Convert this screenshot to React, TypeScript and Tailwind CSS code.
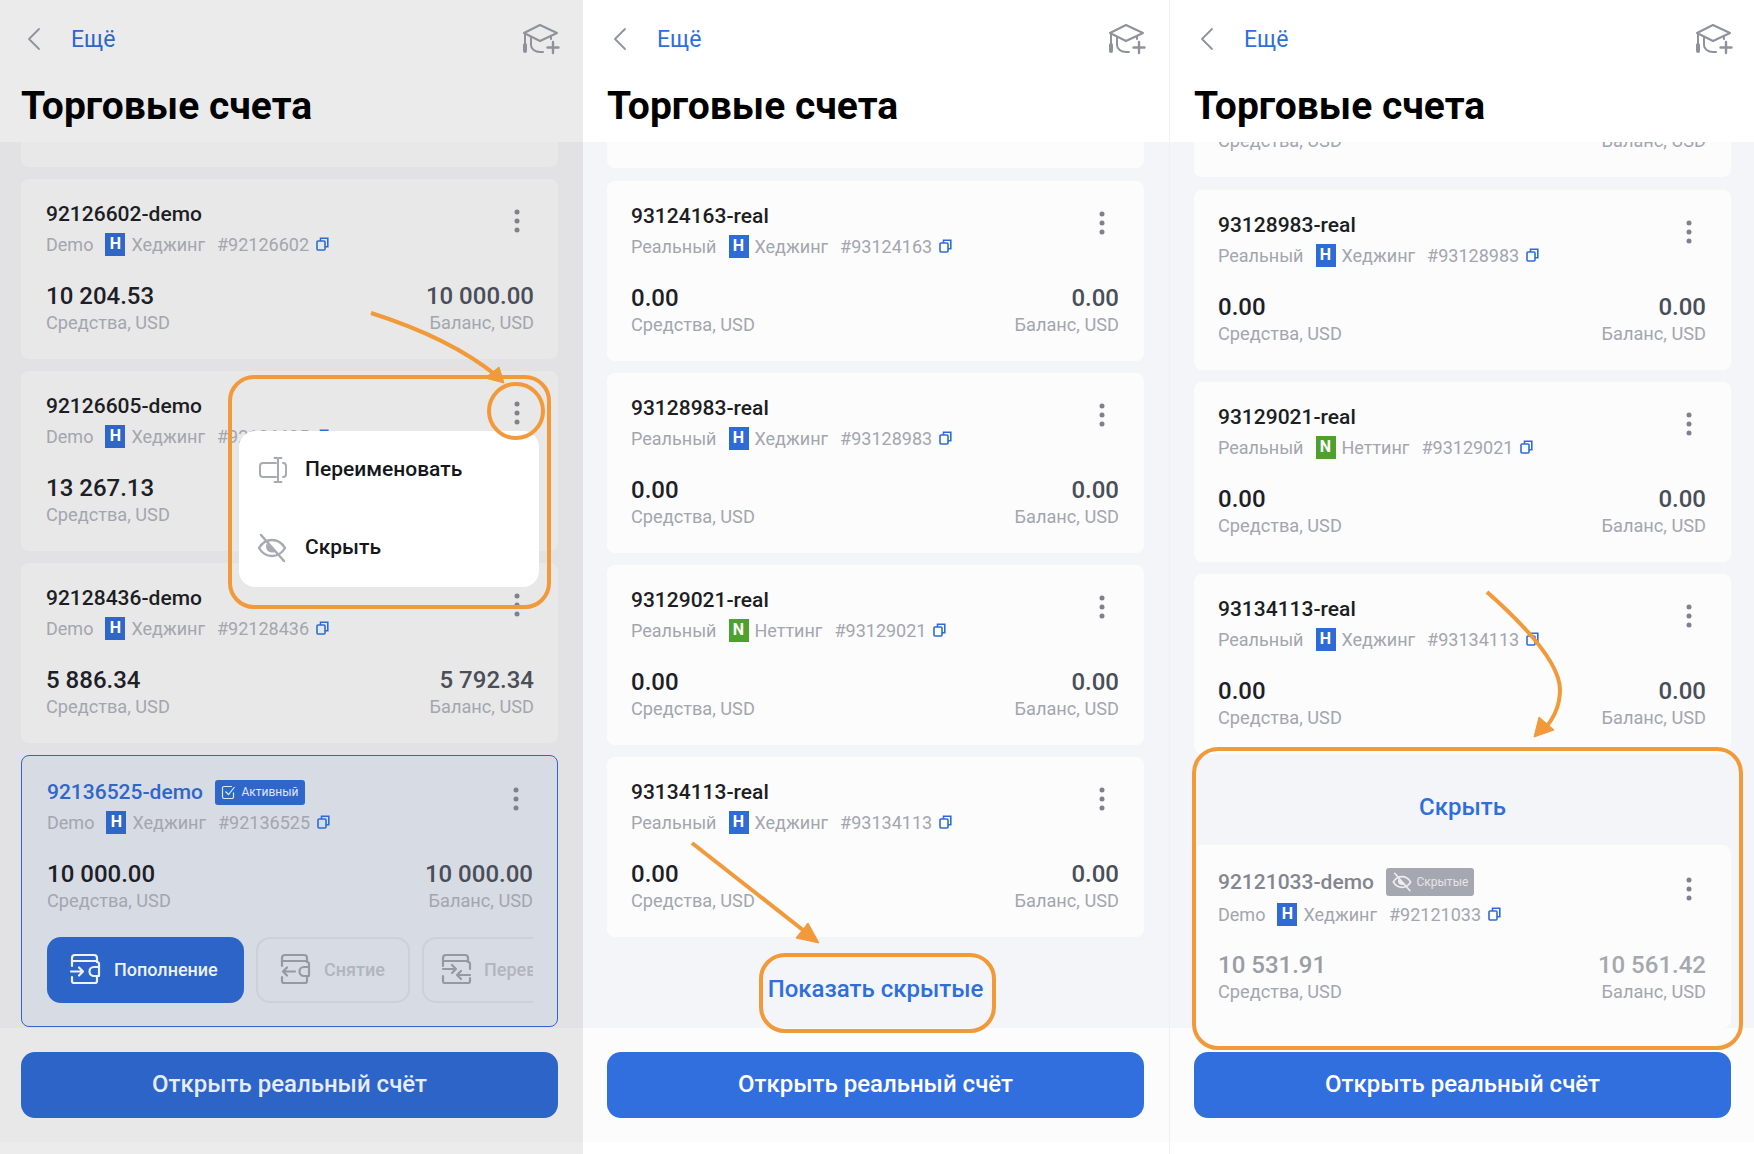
import React from "react";

type Theme = "dim" | "light";

type Account = {
  name: string;
  kind: string;
  net: "H" | "N";
  num: string;
  equity: string;
  balance: string;
};

function Chevron() {
  return (
    <svg width="16" height="24" viewBox="0 0 16 24" fill="none" stroke="#8f939c" strokeWidth="1.8" strokeLinecap="round" strokeLinejoin="round">
      <path d="M13 2 3 12l10 10" />
    </svg>
  );
}

function CapIcon() {
  return (
    <svg width="38" height="34" viewBox="0 0 38 34" fill="none" stroke="#8f929a" strokeWidth="2" strokeLinecap="round" strokeLinejoin="round">
      <path d="M18 3 2 11l16 8 17-8z" />
      <path d="M9 15v8c0 4 4 7 9 7h3" />
      <path d="M29 14v3" />
      <path d="M3 12v12" />
      <path d="M3 23v6" strokeWidth="4" />
      <path d="M31 20v11M25.5 25.5h11" strokeWidth="2.4" />
    </svg>
  );
}

function Kebab({ color = "#7f828b" }: { color?: string }) {
  return (
    <svg width="20" height="24" viewBox="0 0 20 24" fill={color}>
      <circle cx="10" cy="3" r="2.5" />
      <circle cx="10" cy="12" r="2.5" />
      <circle cx="10" cy="21" r="2.5" />
    </svg>
  );
}

function CopyIcon() {
  return (
    <svg width="13" height="14" viewBox="0 0 13 14" fill="none" stroke="#2f6bd6" strokeWidth="1.6">
      <rect x="1" y="4" width="8" height="9" rx="1" />
      <path d="M4.5 4V1.2h7.3v8.6H9" />
    </svg>
  );
}

function EyeOff({ size = 30, color = "#a7aab2" }: { size?: number; color?: string }) {
  return (
    <svg width={size} height={size} viewBox="0 0 30 30" fill="none" stroke={color} strokeWidth="2.4" strokeLinecap="round">
      <path d="M2 15c3-5 8-8 13-8s10 3 13 8c-3 5-8 8-13 8S5 20 2 15z" />
      <path d="M9.500 10.500c-1.500 4.500.5 9 5.500 9 2 0 3.500-.5 4.500-1.500z" fill={color} stroke="none" />
      <path d="M4 2l23 26" />
    </svg>
  );
}

function RenameIcon() {
  return (
    <svg width="30" height="28" viewBox="0 0 30 28" fill="none" stroke="#a7aab2" strokeWidth="2" strokeLinecap="round">
      <path d="M18 7H5a3 3 0 0 0-3 3v8a3 3 0 0 0 3 3h13" />
      <path d="M20 2v24M16.500 2h7M16.500 26h7" />
      <path d="M25 7c2 0 3 1.500 3 3v8c0 1.500-1 3-3 3" />
    </svg>
  );
}

function WalletIcon({ mode, color }: { mode: "in" | "out" | "move"; color: string }) {
  return (
    <svg width="32" height="34" viewBox="0 0 32 34" fill="none" stroke={color} strokeWidth="2.2" strokeLinecap="round" strokeLinejoin="round" className="shrink-0">
      <path d="M3 14V6a3 3 0 0 1 3-3h19a3 3 0 0 1 3 3v4" />
      <path d="M3 9h25" />
      {mode === "move" ? (
        <>
          <path d="M28 10a2 2 0 0 1 2 2v5" />
          <path d="M3 17h13M12 13l4 4-4 4" />
          <path d="M3 24v5a2 2 0 0 0 2 2h23a2 2 0 0 0 2-2v-3" />
          <path d="M30 23H17M21 19l-4 4 4 4" />
        </>
      ) : (
        <>
          <path d="M3 25v4a2 2 0 0 0 2 2h21a2 2 0 0 0 2-2v-4" />
          <path d="M28 10a2 2 0 0 1 2 2v3" />
          <path d="M30 15h-5a4.500 4.500 0 0 0 0 9h5z" />
          {mode === "in" ? <path d="M2 19.500h12M10 15.500l4 4-4 4" /> : <path d="M16 19.500H4M8 15.500l-4 4 4 4" />}
        </>
      )}
    </svg>
  );
}

function Card({
  a,
  theme,
  state = "normal",
  className = "",
}: {
  a: Account;
  theme: Theme;
  state?: "normal" | "active" | "hidden";
  className?: string;
}) {
  const active = state === "active";
  const hidden = state === "hidden";
  const dim = theme === "dim";
  const box = active
    ? "h-[272px] border-[1.5px] border-[#2f66c8] bg-[#d7dbe4] pl-[25px] pr-[24px] pt-[23px] "
    : hidden
      ? "h-[183px] bg-[#fcfcfd] pl-[24px] pr-[25px] pt-[24px] "
      : dim
        ? "h-[180px] bg-[#e8e8e9] pl-[25px] pr-[24px] pt-[22px] "
        : "h-[180px] bg-[#fcfcfd] pl-[24px] pr-[25px] pt-[22px] ";
  return (
    <div className={"shrink-0 rounded-[8px] " + box + className}>
      <div className="flex justify-between">
        <div>
          <div className="flex h-[26px] items-center gap-[12px]">
            <span
              className={
                "text-[21px] font-medium leading-[26px] " +
                (active ? "text-[#2f66c8]" : hidden ? "text-[#83868e]" : "text-[#1c1e23]")
              }
            >
              {a.name}
            </span>
            {active && (
              <span className="flex h-[25px] w-[90px] items-center justify-center gap-[5px] rounded-[3px] bg-[#2f66c8] text-[12px] text-[#dfe7f7]">
                <svg width="15" height="15" viewBox="0 0 15 15" fill="none" stroke="#dfe7f7" strokeWidth="1.200">
                  <path d="M12.500 7.500v4.500a1.500 1.500 0 0 1-1.500 1.500H3A1.500 1.500 0 0 1 1.500 12V3A1.500 1.500 0 0 1 3 1.500h8" />
                  <path d="M4.500 6.500l3 3 6-7.500" />
                </svg>
                Активный
              </span>
            )}
            {hidden && (
              <span className="flex h-[28px] w-[88px] items-center justify-center gap-[5px] rounded-[3px] bg-[#a5a8b0] text-[12px] text-[#e4e5e8]">
                <EyeOff size={20} color="#eceef0" />
                Скрытые
              </span>
            )}
          </div>
          <div className={"flex h-[24px] items-center text-[18px] text-[#a3a6ae] " + (hidden ? "mt-[7px]" : "mt-[5px]")}>
            <span>{a.kind}</span>
            <span
              className={
                "ml-[12px] flex h-[23px] w-[20px] items-center justify-center text-[16px] font-bold text-white " +
                (a.net === "H" ? (dim ? "bg-[#2f66c8]" : "bg-[#2f6bd6]") : "bg-[#4fa12d]")
              }
            >
              {a.net}
            </span>
            <span className="ml-[6px]">{a.net === "H" ? "Хеджинг" : "Неттинг"}</span>
            <span className="ml-[12px]">#{a.num}</span>
            <span className="ml-[7px]">
              <CopyIcon />
            </span>
          </div>
        </div>
        <div className="mr-[7px] mt-[8px]">
          <Kebab />
        </div>
      </div>
      <div className={"flex justify-between " + (hidden ? "mt-[24px]" : "mt-[25px]")}>
        <div>
          <div className={"text-[24px] font-medium leading-[30px] " + (hidden ? "text-[#9a9da4]" : "text-[#1d2026]")}>
            {a.equity}
          </div>
          <div className="text-[18.2px] leading-[24px] text-[#a3a6ae]">Средства, USD</div>
        </div>
        <div className="text-right">
          <div className={"text-[24px] font-medium leading-[30px] " + (hidden ? "text-[#a5a8af]" : "text-[#4a4e58]")}>
            {a.balance}
          </div>
          <div className="text-[18.2px] leading-[24px] text-[#a3a6ae]">Баланс, USD</div>
        </div>
      </div>
      {active && (
        <div className="mt-[24px] flex gap-[12px] overflow-hidden">
          <button className="flex h-[66px] w-[197px] shrink-0 items-center gap-[13px] rounded-[14px] bg-[#2c64c8] pb-[2px] pl-[22px] text-[18px] font-medium text-[#eef2fb]">
            <WalletIcon mode="in" color="#eef2fb" />
            Пополнение
          </button>
          <button className="flex h-[66px] w-[154px] shrink-0 items-center gap-[13px] rounded-[14px] border-2 border-[#ccd0d9] pb-[2px] pl-[21px] text-[18px] font-medium text-[#b1b5be]">
            <WalletIcon mode="out" color="#9599a3" />
            Снятие
          </button>
          <button className="flex h-[66px] w-[154px] shrink-0 items-center gap-[12px] rounded-[14px] border-2 border-[#ccd0d9] pb-[2px] pl-[16px] text-[18px] font-medium text-[#b1b5be]">
            <WalletIcon mode="move" color="#9599a3" />
            Перевод
          </button>
        </div>
      )}
    </div>
  );
}

function Panel({
  theme,
  className,
  listClass,
  children,
}: {
  theme: Theme;
  className: string;
  listClass: string;
  children: React.ReactNode;
}) {
  const dim = theme === "dim";
  return (
    <div className={"relative flex h-full shrink-0 flex-col " + className}>
      <div className={"h-[142px] shrink-0 pt-[23px] " + listClass + (dim ? " bg-[#ebebec]" : " bg-white")}>
        <div className="flex h-[32px] items-center justify-between">
          <div className="flex items-center">
            <span className="ml-[5px] flex w-[45px]">
              <Chevron />
            </span>
            <span className={"pt-[3px] text-[23px] " + (dim ? "text-[#2f66c8]" : "text-[#2f6fdc]")}>Ещё</span>
          </div>
          <span className="-mr-[2px]">
            <CapIcon />
          </span>
        </div>
        <h1 className="mt-[29px] text-[39px] font-bold leading-[44px] text-black">Торговые счета</h1>
      </div>
      <div className={"flex min-h-0 flex-1 flex-col gap-[12px] overflow-hidden " + listClass + (dim ? " bg-[#e2e2e4]" : " bg-[#f4f5f8]")}>
        {children}
      </div>
      <div className={"h-[114px] shrink-0 pt-[24px] " + listClass + (dim ? " bg-[#e8e8e9]" : " bg-[#fcfcfd]")}>
        <button className={"flex h-[66px] w-full items-center justify-center rounded-[14px] pb-[2px] text-[24px] font-medium " + (dim ? "bg-[#2c64c8] text-[#e6ecf8]" : "bg-[#316fdf] text-white")}>
          Открыть реальный счёт
        </button>
      </div>
      <div className={"h-[12px] shrink-0 " + (dim ? "bg-[#ececed]" : "bg-white")} />
    </div>
  );
}

const r = (name: string, net: "H" | "N" = "H"): Account => ({
  name: name + "-real",
  kind: "Реальный",
  net,
  num: name,
  equity: "0.00",
  balance: "0.00",
});

const d = (name: string, equity: string, balance: string): Account => ({
  name: name + "-demo",
  kind: "Demo",
  net: "H",
  num: name,
  equity,
  balance,
});

export default function App() {
  return (
    <div className="relative flex h-[1154px] w-[1754px] overflow-hidden bg-white font-['Roboto',sans-serif]">
      <Panel theme="dim" className="w-[583px]" listClass="pl-[21px] pr-[25px]">
        <div className="mt-[-155px] h-[180px] shrink-0 rounded-[8px] bg-[#e8e8e9]" />
        <Card theme="dim" a={d("92126602", "10 204.53", "10 000.00")} />
        <Card theme="dim" a={d("92126605", "13 267.13", "13 267.13")} />
        <Card theme="dim" a={d("92128436", "5 886.34", "5 792.34")} />
        <Card theme="dim" state="active" a={d("92136525", "10 000.00", "10 000.00")} />
      </Panel>

      <Panel theme="light" className="w-[587px] border-r border-[#eef0f3]" listClass="pl-[24px] pr-[25px]">
        <Card theme="light" className="mb-[1px] mt-[-154px]" a={r("93124163")} />
        <Card theme="light" a={r("93124163")} />
        <Card theme="light" a={r("93128983")} />
        <Card theme="light" a={r("93129021", "N")} />
        <Card theme="light" a={r("93134113")} />
        <div className="flex h-[79px] shrink-0 items-center justify-center text-[24px] font-medium text-[#2f6fdc]">
          Показать скрытые
        </div>
      </Panel>

      <Panel theme="light" className="w-[584px]" listClass="pl-[24px] pr-[23px]">
        <Card theme="light" className="mb-[1px] mt-[-145px]" a={r("93124163")} />
        <Card theme="light" a={r("93128983")} />
        <Card theme="light" a={r("93129021", "N")} />
        <Card theme="light" a={r("93134113")} />
        <div className="-my-[12px] flex h-[91px] shrink-0 items-center justify-center pt-[14px] text-[24px] font-medium text-[#2f6fdc]">
          Скрыть
        </div>
        <Card theme="light" state="hidden" a={d("92121033", "10 531.91", "10 561.42")} />
      </Panel>

      {/* context menu on the first panel */}
      <div className="absolute left-[239px] top-[431px] flex h-[156px] w-[300px] flex-col rounded-[16px] bg-white text-[21px] font-medium text-[#15171b]">
        <div className="flex h-[78px] items-center gap-[17px] pb-[1px] pl-[19px]">
          <RenameIcon />
          Переименовать
        </div>
        <div className="flex h-[78px] items-center gap-[18px] pb-[1px] pl-[18px]">
          <EyeOff />
          Скрыть
        </div>
      </div>

      {/* orange annotations */}
      <svg className="pointer-events-none absolute left-0 top-0" width="1754" height="1154" fill="none" stroke="#f2993a" strokeWidth="4">
        <rect x="230" y="377" width="319" height="230" rx="24" />
        <circle cx="516" cy="411" r="27" />
        <path d="M371 313Q450 338 497 376" />
        <path d="M485 378 499 367 504 383z" fill="#f2993a" strokeWidth="1" />
        <rect x="761" y="955" width="233" height="76" rx="24" />
        <path d="M692 843 808 934" />
        <path d="M796 938 808 923 819 943z" fill="#f2993a" strokeWidth="1" />
        <rect x="1194" y="749" width="547" height="299" rx="24" />
        <path d="M1487 592C1530 630 1560 665 1560 690 1560 708 1552 720 1544 730" />
        <path d="M1534 737 1539 717 1554 730z" fill="#f2993a" strokeWidth="1" />
      </svg>
    </div>
  );
}
